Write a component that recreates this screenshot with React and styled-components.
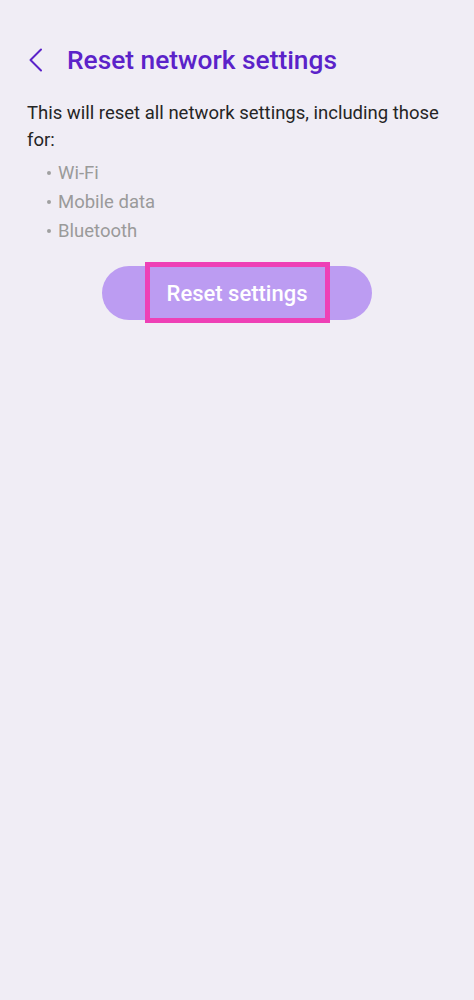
import styled, { createGlobalStyle } from "styled-components"

const Global = createGlobalStyle`
    html, body {
        margin: 0;
        padding: 0;
        background: #f0edf5;
    }
    body {
        font-family: Roboto, "Noto Sans", sans-serif;
    }
`

const items = ["Wi-Fi", "Mobile data", "Bluetooth"]

const App = () => {
    return (
        <Screen>
            <Global />
            <Header>
                <BackBtn aria-label="Back">
                    <svg width="16" height="24" viewBox="0 0 16 24" fill="none">
                        <path d="M13 1.5L2.5 12L13 22.5" stroke="#5b22c9" strokeWidth="2" strokeLinecap="round" strokeLinejoin="round" />
                    </svg>
                </BackBtn>
                <Title>Reset network settings</Title>
            </Header>

            <Content>
                <Description>
                    This will reset all network settings, including those for:
                </Description>
                <List>
                    {items.map((item) => (
                        <Item key={item}>
                            <Dot />
                            {item}
                        </Item>
                    ))}
                </List>

                <ButtonRow>
                    <ResetBtn>
                        Reset settings
                        <Highlight />
                    </ResetBtn>
                </ButtonRow>
            </Content>
        </Screen>
    )
}

// Styles
const Screen = styled.div`
    min-height: 1000px;
    background: #f0edf5;
`
const Header = styled.header`
    display: flex;
    align-items: center;
    padding: 30px 0 0 28px;
    box-sizing: border-box;
    height: 90px;
`
const BackBtn = styled.button`
    display: flex;
    align-items: center;
    justify-content: center;
    width: 16px;
    height: 24px;
    padding: 0;
    border: none;
    background: none;
    margin-right: 23px;
`
const Title = styled.h1`
    margin: 0;
    font-size: 26.3px;
    font-weight: 500;
    color: #5b22c9;
`
const Content = styled.div`
    padding: 10px 27px 0 27px;
`
const Description = styled.p`
    margin: 0;
    font-size: 18.5px;
    line-height: 27px;
    color: #252525;
`
const List = styled.ul`
    list-style: none;
    margin: 4px 0 0 0;
    padding: 0 0 0 20px;
`
const Item = styled.li`
    display: flex;
    align-items: center;
    gap: 7px;
    height: 29px;
    font-size: 18.5px;
    color: #9a9a9a;
`
const Dot = styled.span`
    width: 4px;
    height: 4px;
    border-radius: 50%;
    background: #a0a0a0;
`
const ButtonRow = styled.div`
    display: flex;
    justify-content: center;
    margin-top: 21px;
`
const ResetBtn = styled.button`
    position: relative;
    width: 270px;
    height: 54px;
    border: none;
    border-radius: 27px;
    background: #bc9cf2;
    color: #ffffff;
    font-family: Roboto, "Noto Sans", sans-serif;
    font-size: 22px;
    font-weight: 500;
`
const Highlight = styled.span`
    position: absolute;
    left: 43px;
    top: -4px;
    width: 185px;
    height: 61px;
    box-sizing: border-box;
    border: 5px solid #ee40b6;
`

export default App
